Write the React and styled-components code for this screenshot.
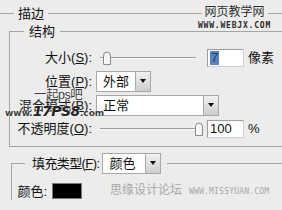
import React from "react";
import styled, { createGlobalStyle } from "styled-components";

const GlobalStyle = createGlobalStyle`
  html, body {
    margin: 0;
    padding: 0;
    background: #ececec;
  }
  body {
    font-family: "Liberation Sans", "Noto Sans CJK SC", sans-serif;
    font-size: 13px;
    color: #111;
  }
`;

const Panel = styled.div`
  position: relative;
  width: 282px;
  height: 210px;
  overflow: hidden;
  box-sizing: border-box;
  padding-top: 7px;
  background: #ececec;
`;

const Section = styled.fieldset`
  margin: 0;
  padding: 0;
  min-width: 0;
  border: none;
  border-top: 1px solid #a4a4a4;
`;

const Legend = styled.legend`
  margin-left: ${(p) => p.$offset}px;
  padding: ${(p) => p.$pad || "0 4px"};
  line-height: 13px;
  height: 13px;
`;

const Group = styled.fieldset`
  margin: ${(p) => p.$margin};
  padding: ${(p) => p.$padding};
  min-width: 0;
  border: 1px solid #a4a4a4;
  border-right: none;
  border-bottom: ${(p) => (p.$open ? "none" : "1px solid #a4a4a4")};
  display: flex;
  flex-direction: column;
  gap: 2px;
`;

const Row = styled.div`
  display: flex;
  align-items: center;
  height: ${(p) => p.$h}px;
`;

const Label = styled.span`
  width: ${(p) => (p.$w ? `${p.$w}px` : "auto")};
  flex-shrink: 0;
  text-align: right;
  line-height: 13px;
  white-space: nowrap;
  letter-spacing: ${(p) => p.$ls || 0}px;
  u {
    text-decoration: underline;
    text-underline-offset: 1px;
  }
`;

const SliderWrap = styled.div`
  position: relative;
  width: 96px;
  height: 16px;
  margin-left: 8px;
  display: flex;
  align-items: center;
`;

const Track = styled.div`
  width: 100%;
  height: 0;
  border-top: 1px solid #9c9c9c;
  border-bottom: 1px solid #fafafa;
`;

const Thumb = styled.svg`
  position: absolute;
  top: 1px;
`;

const Input = styled.div`
  box-sizing: border-box;
  width: 37px;
  height: 18px;
  margin-left: ${(p) => p.$ml}px;
  padding-left: 2px;
  background: #fff;
  border: 1px solid #9d9d9d;
  border-right-color: #cfcfcf;
  border-bottom-color: #cfcfcf;
  display: flex;
  align-items: center;
  font-size: 13px;
  line-height: 14px;
`;

const Selected = styled.span`
  background: #5b82c2;
  color: #1d3f78;
  padding: 0 1px;
`;

const Unit = styled.span`
  margin-left: 4px;
  line-height: 13px;
`;

const SelectBox = styled.div`
  display: flex;
  height: 21px;
  margin-left: ${(p) => p.$ml || 4}px;
`;

const SelectField = styled.div`
  box-sizing: border-box;
  width: ${(p) => p.$w}px;
  height: 100%;
  background: #fff;
  border: 1px solid #a8a8a8;
  border-right: none;
  padding-left: 6px;
  display: flex;
  align-items: center;
  line-height: 13px;
`;

const ArrowButton = styled.div`
  box-sizing: border-box;
  width: 16px;
  height: 100%;
  border: 1px solid #a8a8a8;
  background: linear-gradient(#f2f2f2, #cdcdcd);
  display: flex;
  align-items: center;
  justify-content: center;
  &::after {
    content: "";
    border-left: 3.5px solid transparent;
    border-right: 3.5px solid transparent;
    border-top: 4px solid #111;
  }
`;

const FillLegend = styled.legend`
  margin-left: 8px;
  padding: 0 6px 0 7px;
  display: flex;
  align-items: center;
  height: 22px;
`;

const Swatch = styled.div`
  box-sizing: border-box;
  width: 30px;
  height: 16px;
  margin-left: 5px;
  background: #000;
  border: 1px solid #7a7a7a;
`;

const SiteMark = styled.span`
  margin-left: 28px;
  color: #a8a8a8;
  font-size: 12px;
  line-height: 13px;
  white-space: nowrap;
  small {
    margin-left: 7px;
    font-family: "DejaVu Sans Mono", monospace;
    font-size: 8px;
    letter-spacing: 0.2px;
  }
`;

const TopMark = styled.div`
  position: absolute;
  left: 198px;
  top: 5px;
  display: flex;
  flex-direction: column;
  align-items: center;
  color: #2a2a2a;
`;

const TopMarkTitle = styled.span`
  background: #ececec;
  padding: 0 3px;
  font-size: 12px;
  line-height: 14px;
  text-shadow: 0 0 1px #fff;
`;

const TopMarkUrl = styled.span`
  margin-top: 3px;
  font-family: "DejaVu Sans Mono", monospace;
  font-weight: bold;
  font-size: 8px;
  letter-spacing: 0.8px;
  line-height: 8px;
`;

const PsMark = styled.div`
  position: absolute;
  left: 5px;
  top: 89px;
  color: #3a3a3a;
  text-shadow: 0 0 1px #fff, 0 0 2px #fff;
  line-height: 1;
`;

const PsTitle = styled.div`
  margin-left: 29px;
  font-size: 12.5px;
  letter-spacing: -0.5px;
`;

const PsUrl = styled.div`
  margin-top: 2px;
  font-family: "DejaVu Sans", sans-serif;
  font-weight: bold;
  white-space: nowrap;
  span {
    font-size: 9px;
  }
  b {
    font-size: 14px;
    font-style: italic;
    letter-spacing: -0.5px;
    color: #222;
  }
`;

const SliderThumb = ({ pos }) => (
  <Thumb width="10" height="14" viewBox="0 0 10 14" style={{ left: pos }}>
    <path
      d="M1.5 13.5 V5 Q1.5 1 5 1 Q8.5 1 8.5 5 V13.5 Z"
      fill="#f4f4f4"
      stroke="#8a8a8a"
    />
    <path d="M3 12 V5.5 Q3 2.5 5 2.5" fill="none" stroke="#fff" />
  </Thumb>
);

const Slider = ({ pos }) => (
  <SliderWrap>
    <Track />
    <SliderThumb pos={pos} />
  </SliderWrap>
);

const Select = ({ value, width, ml }) => (
  <SelectBox $ml={ml}>
    <SelectField $w={width}>{value}</SelectField>
    <ArrowButton />
  </SelectBox>
);

const App = () => {
  return (
    <>
      <GlobalStyle />
      <Panel>
        <Section>
          <Legend $offset={14}>描边</Legend>
          <Group $margin="5px 0 0 9px" $padding="9px 0 7px 0">
            <Legend $offset={14} $pad="0 5px">
              结构
            </Legend>
            <Row $h={21}>
              <Label $w={82}>
                大小(<u>S</u>):
              </Label>
              <Slider pos={2} />
              <Input $ml={11}>
                <Selected>7</Selected>
              </Input>
              <Unit>像素</Unit>
            </Row>
            <Row $h={22}>
              <Label $w={82}>
                位置(<u>P</u>):
              </Label>
              <Select value="外部" width={39} />
            </Row>
            <Row $h={22}>
              <Label $w={82}>
                混合模式(<u>B</u>):
              </Label>
              <Select value="正常" width={107} />
            </Row>
            <Row $h={21}>
              <Label $w={82}>
                不透明度(<u>O</u>):
              </Label>
              <Slider pos={94} />
              <Input $ml={11}>100</Input>
              <Unit>%</Unit>
            </Row>
          </Group>
          <Group $margin="5px 0 0 11px" $padding="8px 0 0 5px" $open>
            <FillLegend>
              <Label $ls={-0.6}>
                填充类型(<u>F</u>):
              </Label>
              <Select value="颜色" width={43} ml={3} />
            </FillLegend>
            <Row $h={18}>
              <Label $w={30}>颜色:</Label>
              <Swatch />
              <SiteMark>
                思缘设计论坛<small>WWW.MISSYUAN.COM</small>
              </SiteMark>
            </Row>
          </Group>
        </Section>
        <TopMark>
          <TopMarkTitle>网页教学网</TopMarkTitle>
          <TopMarkUrl>WWW.WEBJX.COM</TopMarkUrl>
        </TopMark>
        <PsMark>
          <PsTitle>一起ps吧</PsTitle>
          <PsUrl>
            <span>www.</span>
            <b>17PS8</b>
            <span>.com</span>
          </PsUrl>
        </PsMark>
      </Panel>
    </>
  );
};

export default App;
